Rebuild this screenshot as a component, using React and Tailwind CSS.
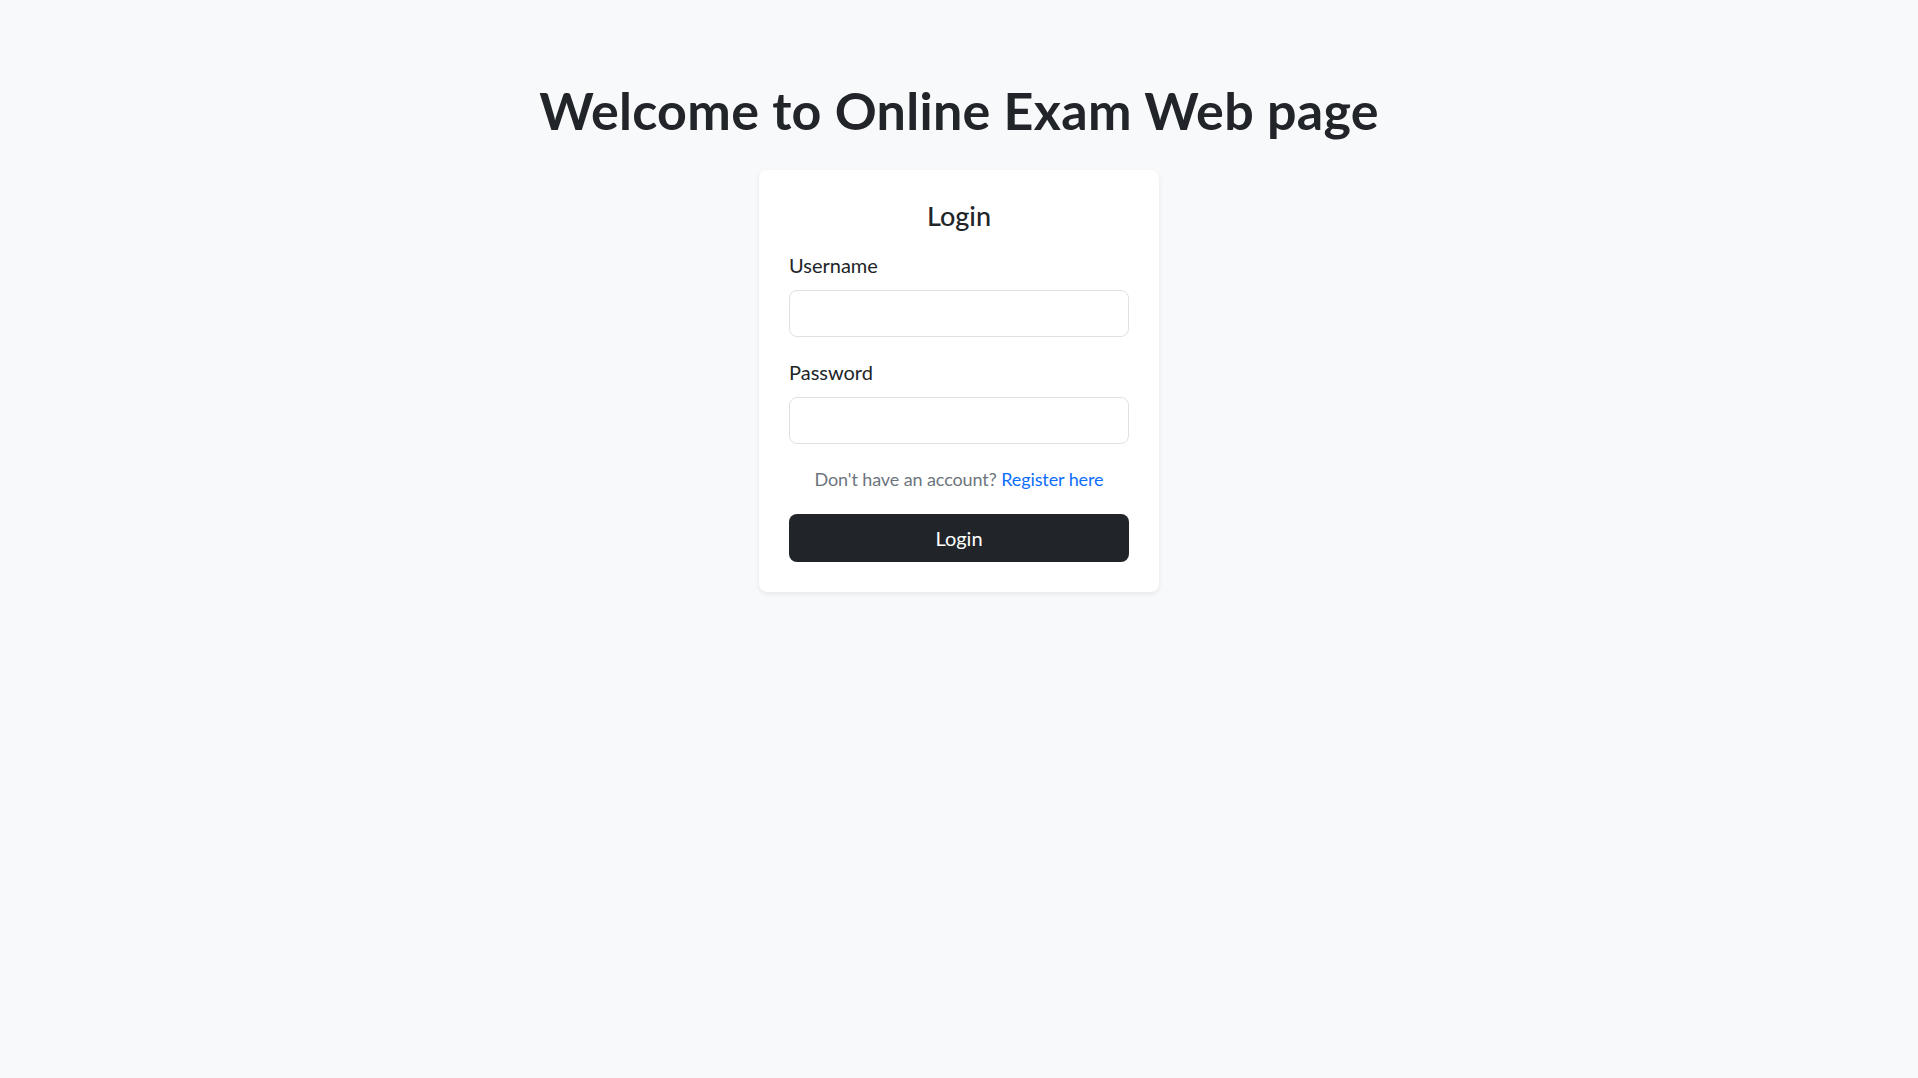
import React, { useState } from 'react';

export default function App() {
  const [username, setUsername] = useState('');
  const [password, setPassword] = useState('');

  return (
    <div className="min-h-screen bg-[#f8f9fa] text-[#212529] font-['Lato','Noto_Sans',sans-serif]">
      <div className="flex flex-col items-center pt-[80px]">
        <h1 className="text-[52px] leading-[60px] font-bold tracking-[0.3px] mb-[30px]">
          Welcome to Online Exam Web page
        </h1>

        {/* Login card */}
        <div className="w-[400px] bg-white rounded-[8px] shadow-[0_2px_5px_rgba(0,0,0,0.08)] p-[30px]">
          <h4 className="text-center text-[27px] leading-[32px] font-medium mb-[18px]">Login</h4>

          <form onSubmit={(e) => e.preventDefault()}>
            <div className="mb-[20px]">
              <label className="block text-[20px] leading-[30px] mb-[10px]">Username</label>
              <input
                type="text"
                value={username}
                onChange={(e) => setUsername(e.target.value)}
                className="w-full h-[47px] px-[15px] border border-[#dee2e6] rounded-[8px] bg-white outline-none"
              />
            </div>

            <div className="mb-[20px]">
              <label className="block text-[20px] leading-[30px] mb-[10px]">Password</label>
              <input
                type="password"
                value={password}
                onChange={(e) => setPassword(e.target.value)}
                className="w-full h-[47px] px-[15px] border border-[#dee2e6] rounded-[8px] bg-white outline-none"
              />
            </div>

            <p className="text-center text-[18px] leading-[30px] tracking-[-0.1px] text-[#6c757d] whitespace-nowrap mb-[20px]">
              Don't have an account? <a href="#" className="text-[#0d6efd]">Register here</a>
            </p>

            <button
              type="submit"
              className="w-full h-[48px] bg-[#212529] text-white text-[20px] rounded-[8px]"
            >
              Login
            </button>
          </form>
        </div>
      </div>
    </div>
  );
}
